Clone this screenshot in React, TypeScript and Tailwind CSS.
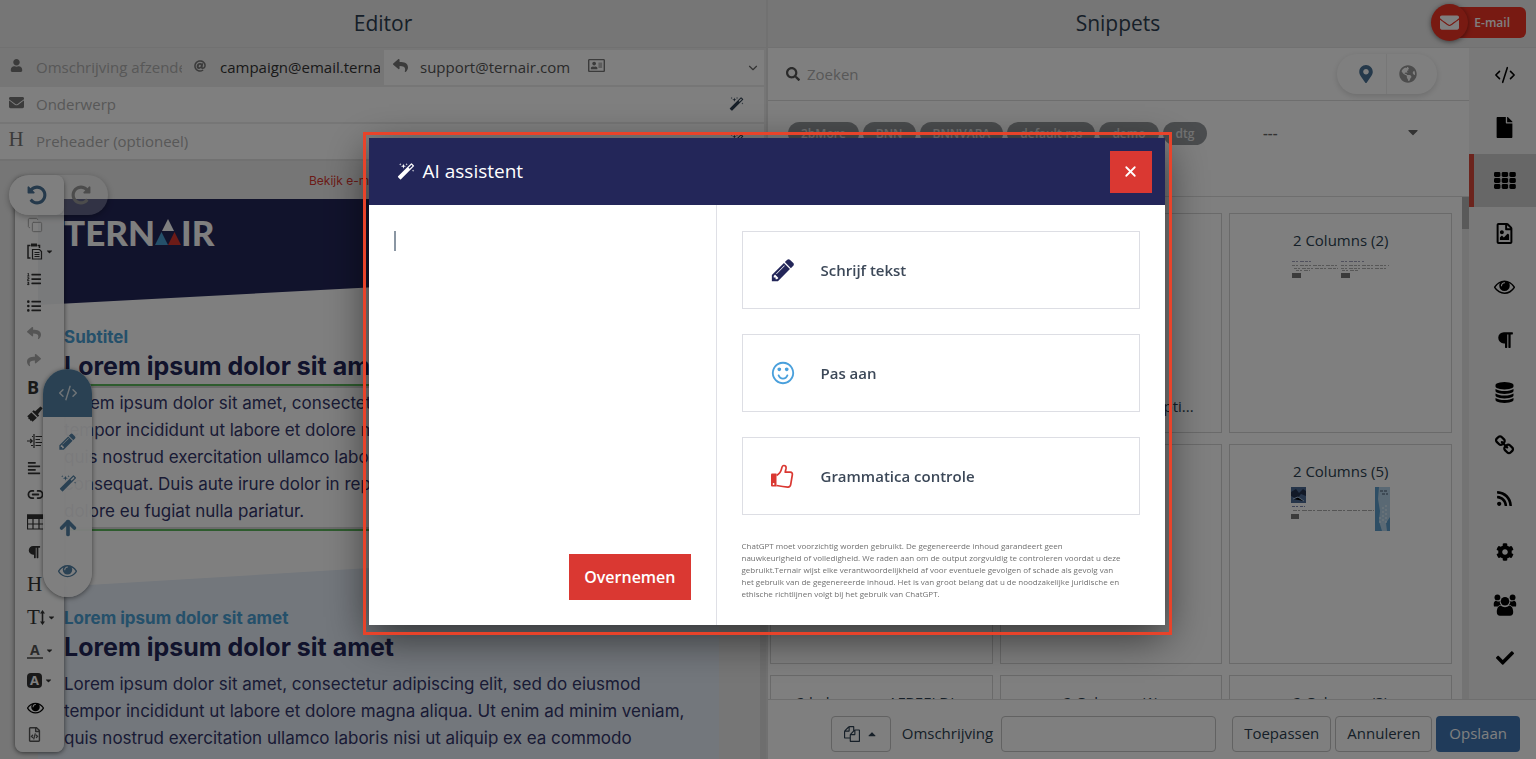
import { useState, type ReactNode } from 'react';
import clsx from 'clsx';
import {
  FaAlignLeft,
  FaAt,
  FaCaretDown,
  FaCaretUp,
  FaCheck,
  FaCog,
  FaEnvelope,
  FaFile,
  FaGlobeAmericas,
  FaListOl,
  FaListUl,
  FaMapMarkerAlt,
  FaParagraph,
  FaRegAddressCard,
  FaRegFileCode,
  FaRegFileImage,
  FaReply,
  FaRss,
  FaSearch,
  FaShare,
  FaUser,
} from 'react-icons/fa';
import {
  ArrowUp,
  ChevronDown,
  CodeXml,
  Copy,
  Link2,
  X,
} from 'lucide-react';

const PATHS = {
  magic:
    'M1254 581l293-293-107-107-293 293zm447-293q0 27-18 45l-1286 1286q-18 18-45 18t-45-18l-198-198q-18-18-18-45t18-45l1286-1286q18-18 45-18t45 18l198 198q18 18 18 45zm-1351-190l98 30-98 30-30 98-30-98-98-30 98-30 30-98zm350 162l196 60-196 60-60 196-60-196-196-60 196-60 60-196zm930 478l98 30-98 30-30 98-30-98-98-30 98-30 30-98zm-640-640l98 30-98 30-30 98-30-98-98-30 98-30 30-98z',
  pencil:
    'M491 1536l91-91-235-235-91 91v107h128v128h107zm523-928q0-22-22-22-10 0-17 7l-542 542q-7 7-7 17 0 22 22 22 10 0 17-7l542-542q7-7 7-17zm-54-192l416 416-832 832h-416v-416zm683 96q0 53-37 90l-166 166-416-416 166-165q36-38 90-38 53 0 91 38l235 234q37 39 37 91z',
  smile:
    'M1262 1075q-37 121-138 195t-228 74-228-74-138-195q-8-25 4-48.5t38-31.5q25-8 48.5 4t31.5 38q25 80 92.5 129.5t151.5 49.5 151.5-49.5 92.5-129.5q8-26 32-38t49-4 37 31.5 4 48.5zm-494-435q0 53-37.5 90.5t-90.5 37.5-90.5-37.5-37.5-90.5 37.5-90.5 90.5-37.5 90.5 37.5 37.5 90.5zm512 0q0 53-37.5 90.5t-90.5 37.5-90.5-37.5-37.5-90.5 37.5-90.5 90.5-37.5 90.5 37.5 37.5 90.5zm256 256q0-130-51-248.5t-136.5-204-204-136.5-248.5-51-248.5 51-204 136.5-136.5 204-51 248.5 51 248.5 136.5 204 204 136.5 248.5 51 248.5-51 204-136.5 136.5-204 51-248.5zm128 0q0 209-103 385.5t-279.5 279.5-385.5 103-385.5-103-279.5-279.5-103-385.5 103-385.5 279.5-279.5 385.5-103 385.5 103 279.5 279.5 103 385.5z',
  eye:
    'M1664 960q-152-236-381-353 61 104 61 225 0 185-131.5 316.5t-316.5 131.5-316.5-131.5-131.5-316.5q0-121 61-225-229 117-381 353 133 205 333.5 326.5t434.5 121.5 434.5-121.5 333.5-326.5zm-720-384q0-20-14-34t-34-14q-125 0-214.5 89.5t-89.5 214.5q0 20 14 34t34 14 34-14 14-34q0-86 61-147t147-61q20 0 34-14t14-34zm848 384q0 34-20 69-140 230-376.5 368.5t-499.5 138.5-499.5-139-376.5-368q-20-35-20-69t20-69q140-229 376.5-368t499.5-139 499.5 139 376.5 368q20 35 20 69z',
  database:
    'M896 768q237 0 443-43t325-127v170q0 69-103 128t-280 93.5-385 34.5-385-34.5-280-93.5-103-128v-170q119 84 325 127t443 43zm0 768q237 0 443-43t325-127v170q0 69-103 128t-280 93.5-385 34.5-385-34.5-280-93.5-103-128v-170q119 84 325 127t443 43zm0-384q237 0 443-43t325-127v170q0 69-103 128t-280 93.5-385 34.5-385-34.5-280-93.5-103-128v-170q119 84 325 127t443 43zm0-1152q208 0 385 34.5t280 93.5 103 128v128q0 69-103 128t-280 93.5-385 34.5-385-34.5-280-93.5-103-128v-128q0-69 103-128t280-93.5 385-34.5z',
  undo:
    'M1664 896q0 156-61 298t-164 245-245 164-298 61q-172 0-327-72.5t-264-204.5q-7-10-6.5-22.5t8.5-20.5l137-138q10-9 25-9 16 2 23 12 73 95 179 147t225 52q104 0 198.5-40.5t163.5-109.5 109.5-163.5 40.5-198.5-40.5-198.5-109.5-163.5-163.5-109.5-198.5-40.5q-98 0-188 35.5t-160 101.5l137 138q31 30 14 69-17 40-59 40h-448q-26 0-45-19t-19-45v-448q0-42 40-59 39-17 69 14l130 129q107-101 244.5-156.5t284.5-55.5q156 0 298 61t245 164 164 245 61 298z',
  files:
    'M1696 384q40 0 68 28t28 68v1216q0 40-28 68t-68 28h-960q-40 0-68-28t-28-68v-288h-544q-40 0-68-28t-28-68v-672q0-40 20-88t48-76l408-408q28-28 76-48t88-20h416q40 0 68 28t28 68v328q68-40 128-40h416zm-544 213l-299 299h299v-299zm-640-384l-299 299h299v-299zm196 647l316-316v-416h-384v416q0 40-28 68t-68 28h-416v640h512v-256q0-40 20-88t48-76zm956 804v-1152h-384v416q0 40-28 68t-68 28h-416v640h896z',
  chain:
    'M1520 1216q0-40-28-68l-208-208q-28-28-68-28-42 0-72 32 3 3 19 18.5t21.5 21.5 15 19 13 25.5 3.5 27.5q0 40-28 68t-68 28q-15 0-27.5-3.5t-25.5-13-19-15-21.5-21.5-18.5-19q-33 31-33 73 0 40 28 68l206 207q27 27 68 27 40 0 68-26l147-146q28-28 28-67zm-703-705q0-40-28-68l-206-207q-28-28-68-28-39 0-68 27l-147 146q-28 28-28 67 0 40 28 68l208 208q27 27 68 27 42 0 72-31-3-3-19-18.5t-21.5-21.5-15-19-13-25.5-3.5-27.5q0-40 28-68t68-28q15 0 27.5 3.5t25.5 13 19 15 21.5 21.5 18.5 19q33-31 33-73zm895 705q0 120-85 203l-147 146q-83 83-203 83-121 0-204-85l-206-207q-83-83-83-203 0-123 88-209l-88-88q-86 88-208 88-120 0-204-84l-208-208q-84-84-84-204t85-203l147-146q83-83 203-83 121 0 204 85l206 207q83 83 83 203 0 123-88 209l88 88q86-88 208-88 120 0 204 84l208 208q84 84 84 204z',
};

function Glyph({ name, size, className }: { name: keyof typeof PATHS; size: number; className?: string }) {
  return (
    <svg viewBox="0 0 1792 1792" width={size} height={size} fill="currentColor" className={className} aria-hidden="true">
      <path d={PATHS[name]} />
    </svg>
  );
}

function GridIcon() {
  return (
    <svg viewBox="0 0 22 17" width={22} height={17} fill="currentColor" aria-hidden="true">
      {[0, 6, 12].map((y) =>
        [0, 7.7, 15.4].map((x) => <rect key={`${x}-${y}`} x={x} y={y} width="6.4" height="5" rx="1.4" />),
      )}
    </svg>
  );
}

function TableIcon() {
  return (
    <svg viewBox="0 0 18 16" width={18} height={16} className="shrink-0" aria-hidden="true">
      <path d="M.5 1H17.500V15H.500zM.5 10H17.500M6 5V15M12 5V15" fill="none" stroke="currentColor" strokeWidth="1.200" />
      <path d="M0 .500H18V5H0z" fill="currentColor" />
    </svg>
  );
}

function PasteIcon() {
  return (
    <svg viewBox="0 0 16 17" width={16} height={17} fill="none" stroke="currentColor" aria-hidden="true">
      <path d="M3.500 2.500H1V15H3.500M10.500 2.500H12.500V5" strokeWidth="1.500" />
      <path d="M4 .500H10V3.500H4z" fill="currentColor" stroke="none" />
      <path d="M5.500 6.500H12.500L14.500 8.500V16H5.500zM7.500 9.500H12.500M7.500 11.500H12.500M7.500 13.500H12.500" strokeWidth="1.200" />
    </svg>
  );
}

function BrushIcon() {
  return (
    <svg viewBox="0 0 16 16" width={16} height={16} fill="currentColor" aria-hidden="true">
      <path d="M13.500.600L15.600 2.200 11 8.200 12.200 9.600 10.800 10.900 5.200 5.500 6.600 4.200 8.200 5.200z" />
      <path d="M4.400 6.400L9.900 11.800 5.600 15.800 4.400 14.600 3.600 14.900 2.700 13.200 1.400 12.900 1.500 11.500.200 10.300z" />
    </svg>
  );
}

function IndentIcon() {
  return (
    <svg viewBox="0 0 16 14" width={16} height={14} fill="none" stroke="currentColor" strokeWidth="1.200" aria-hidden="true">
      <path d="M0 7H5M3.200 5L5.200 7 3.200 9M7 0V14M8.500 2.500H15M5 2.500H6M8.500 5.500H13M8.500 8.500H15M8.500 11.500H14M4 11.500H6" />
    </svg>
  );
}

function HeightIcon() {
  return (
    <svg viewBox="0 0 5 15" width={5} height={15} fill="currentColor" aria-hidden="true">
      <path d="M2.500 0L5 3.500H3.300V11.500H5L2.500 15 0 11.500H1.700V3.500H0z" />
    </svg>
  );
}

function UsersIcon() {
  return (
    <svg viewBox="0 0 24 22" width={24} height={22} fill="currentColor" aria-hidden="true">
      <circle cx="4.4" cy="3.4" r="2.9" />
      <circle cx="19.6" cy="3.4" r="2.9" />
      <path d="M1 12.5C.2 9 1.400 6.800 3 6.800c1.200 1 2.600 1 3.700.2 0 2 .5 3 1.300 4C6.500 11 5.500 11.600 4.800 12.500zM23 12.500c.8-3.500-.4-5.700-2-5.700-1.200 1-2.600 1-3.700.2 0 2-.5 3-1.300 4 1.500 0 2.500.6 3.200 1.500z" />
      <circle cx="12" cy="7.300" r="4.300" />
      <path d="M7.800 11.500c2.500 2.200 5.900 2.200 8.400 0 2.600.2 4 3.300 4 6.500 0 2.500-1.200 3.700-3.200 3.700H7c-2 0-3.200-1.200-3.200-3.700 0-3.200 1.400-6.300 4-6.500z" />
    </svg>
  );
}

function ThumbIcon() {
  return (
    <svg viewBox="0 0 24 24" width={24} height={24} fill="none" aria-hidden="true">
      <path d="M1 10.500Q1 9.500 2 9.500H6.500V22.500H2Q1 22.500 1 21.500Z" fill="currentColor" />
      <circle cx="3.600" cy="20" r=".9" fill="#fff" />
      <path
        d="M6.500 11.500C9.500 9.800 11 7.500 11.600 4.600 12 2.300 12.600 1.500 13.900 1.500 15.600 1.500 16.300 2.700 16 4.500L15.200 8.200H20.300C22 8.200 22.600 9.400 22.300 11L20.700 20.700C20.400 22.500 19.400 23.200 17.700 23.100 14 22.900 10 22.200 6.500 21.500"
        stroke="currentColor"
        strokeWidth="1.700"
        strokeLinejoin="round"
      />
    </svg>
  );
}

function SerifLetter({ children }: { children: ReactNode }) {
  return <span className="font-['Liberation_Serif',serif] text-[21px] leading-none font-medium">{children}</span>;
}

const tools: { label: string; icon: ReactNode; tall?: boolean; caret?: boolean; muted?: boolean }[] = [
  { label: 'Kopiëren', icon: <Copy size={16} strokeWidth={1.5} />, muted: true },
  { label: 'Plakken', icon: <PasteIcon />, caret: true },
  { label: 'Genummerde lijst', icon: <FaListOl size={14} /> },
  { label: 'Lijst', icon: <FaListUl size={14} /> },
  { label: 'Ongedaan maken', icon: <FaReply size={14} />, muted: true },
  { label: 'Opnieuw', icon: <FaShare size={14} />, muted: true },
  { label: 'Vet', icon: <span className="text-[18px] leading-none font-bold">B</span> },
  { label: 'Opmaak', icon: <BrushIcon /> },
  { label: 'Inspringen', icon: <IndentIcon /> },
  { label: 'Uitlijnen', icon: <FaAlignLeft size={14} /> },
  { label: 'Link', icon: <Link2 size={17} strokeWidth={2.5} /> },
  { label: 'Tabel', icon: <TableIcon /> },
  { label: 'Alinea', icon: <FaParagraph size={14} />, tall: true },
  { label: 'Kop', icon: <SerifLetter>H</SerifLetter>, tall: true },
  {
    label: 'Tekstgrootte',
    icon: (
      <span className="flex items-center">
        <SerifLetter>T</SerifLetter>
        <HeightIcon />
      </span>
    ),
    tall: true,
    caret: true,
  },
  {
    label: 'Tekstkleur',
    icon: <span className="border-b-2 border-[#777] px-[3px] text-[14px] leading-none font-bold text-[#555]">A</span>,
    tall: true,
    caret: true,
  },
  {
    label: 'Achtergrondkleur',
    icon: <span className="rounded-sm bg-[#333] px-[3px] text-[13px] leading-[15px] font-bold text-white">A</span>,
    caret: true,
  },
  { label: 'Voorbeeld', icon: <Glyph name="eye" size={17} className="text-black" /> },
  { label: 'Broncode', icon: <FaRegFileCode size={15} className="text-[#555]" /> },
];

const sideItems: { label: string; icon: ReactNode }[] = [
  { label: 'Code', icon: <CodeXml size={22} strokeWidth={1.7} /> },
  { label: 'Pagina', icon: <FaFile size={21} /> },
  { label: 'Snippets', icon: <GridIcon /> },
  { label: 'Afbeeldingen', icon: <FaRegFileImage size={21} /> },
  { label: 'Voorbeeld', icon: <Glyph name="eye" size={21} /> },
  { label: 'Alinea', icon: <FaParagraph size={18} /> },
  { label: 'Data', icon: <Glyph name="database" size={21} /> },
  { label: 'Links', icon: <Glyph name="chain" size={21} /> },
  { label: 'RSS', icon: <FaRss size={17} /> },
  { label: 'Instellingen', icon: <FaCog size={18} /> },
  { label: 'Doelgroep', icon: <UsersIcon /> },
  { label: 'Controle', icon: <FaCheck size={18} /> },
];

const tags = ['2bMore', 'BNN', 'BNNVARA', 'default-rss', 'demo', 'dtg'];

const snippets: { title?: string; art?: 'text' | 'image'; footer?: string }[] = [
  {},
  { footer: 'Afbeelding & descripti...' },
  { title: '2 Columns (2)', art: 'text' },
  {},
  {},
  { title: '2 Columns (5)', art: 'image' },
  { title: '2 kolommen AFBEELDI...' },
  { title: '2 Columns (1)' },
  { title: '2 Columns (3)' },
];

function SnippetArt({ kind }: { kind: 'text' | 'image' }) {
  if (kind === 'text') {
    return (
      <svg viewBox="0 0 98 20" width={98} height={20} className="mt-[9px]" aria-hidden="true">
        <g stroke="#999" strokeDasharray="3 1 2 2 4 1">
          <path d="M0 2.500H20M49 2.500H72" stroke="#a0a0bb" />
          <path d="M0 6.500H45M49 6.500H97M2 9.500H46M49 9.500H95M4 11.500H18M50 11.500H66" strokeWidth=".8" />
        </g>
        <rect x="0" y="14" width="9" height="5" fill="#777" />
        <rect x="49" y="14" width="9" height="5" fill="#777" />
      </svg>
    );
  }
  return (
    <svg viewBox="0 0 99 44" width={99} height={44} className="mt-[6px]" aria-hidden="true">
      <rect width="15" height="16" fill="#4d6a94" />
      <path d="M0 5l5-3 3 4 4-4 3 2v5l-5-2-4 5-6-3z" fill="#24324f" />
      <path d="M2 12l5-2 6 4" stroke="#a9c3e4" />
      <path d="M1 19.500H14" stroke="#7a86b0" strokeDasharray="3 1 2 2" />
      <path d="M2 23.500H83" stroke="#aaa" strokeDasharray="4 1 2 2 5 1" />
      <rect y="27" width="8" height="5" fill="#777" />
      <rect x="84" width="15" height="44" fill="#b5d3e8" />
      <path d="M84 0h4l-1 12 2 12-1 10 3 10h-7zM99 30l-4 6 1 8h3z" fill="#5c9dca" />
      <path d="M89 4h8M91 7h6" stroke="#44566e" strokeDasharray="3 1" />
      <path d="M92 20v16M95 18v20M89 30v8" stroke="#e9f4fb" strokeDasharray="2 2" />
    </svg>
  );
}

const fieldInput = 'min-w-0 flex-1 bg-transparent outline-none placeholder:text-[#b0b0b0]';

function Field({ id, label, icon, value, className }: {
  id: string;
  label: string;
  icon: ReactNode;
  value?: string;
  className?: string;
}) {
  return (
    <div className={clsx('flex h-[35px] items-center gap-3 pl-2 text-[15px]', className)}>
      <label htmlFor={id} aria-label={label} className="flex w-4 justify-center pb-1 text-[#777]">
        {icon}
      </label>
      <input id={id} placeholder={label} defaultValue={value} className={fieldInput} />
    </div>
  );
}

function EditorTools() {
  return (
    <>
      <div className="absolute top-4 left-[15px] w-[49px] rounded-lg bg-white/95 pt-[34px] pb-1 shadow-[0_1px_5px_rgba(0,0,0,0.6)]">
        {tools.map((t) => (
          <button
            key={t.label}
            aria-label={t.label}
            className={clsx(
              'flex w-full items-center gap-0.5 pl-3',
              t.tall ? 'h-[33px]' : 'h-[27px]',
              t.muted ? 'text-[#aaa]' : 'text-[#333]',
            )}
          >
            {t.icon}
            {t.caret && <FaCaretDown size={9} />}
          </button>
        ))}
      </div>

      <div className="absolute top-[14px] left-[9px] flex h-10 w-[99px] overflow-hidden rounded-full bg-white/30 shadow-[0_2px_6px_rgba(0,0,0,0.3)]">
        <button aria-label="Ongedaan maken" className="flex w-[55px] items-center justify-center rounded-r-lg bg-white text-[#4a7396] shadow">
          <Glyph name="undo" size={22} />
        </button>
        <button aria-label="Opnieuw" className="flex flex-1 items-center pl-1.5 text-[#999]">
          <Glyph name="undo" size={22} className="-scale-x-100" />
        </button>
      </div>

      <div className="absolute top-52 left-[43px] flex w-[49px] flex-col overflow-hidden rounded-full bg-white/95 text-[#5483a6] shadow-[0_1px_5px_rgba(0,0,0,0.5)]">
        <button aria-label="Code" className="flex h-12 items-center justify-center bg-[#5483a6] text-[#dfe8ef]">
          <CodeXml size={20} strokeWidth={1.7} />
        </button>
        <button aria-label="Bewerken" className="flex h-[49px] items-center justify-center">
          <Glyph name="pencil" size={19} />
        </button>
        <button aria-label="AI assistent" className="flex h-9 items-center justify-center">
          <Glyph name="magic" size={18} />
        </button>
        <button aria-label="Omhoog" className="flex h-[51px] items-center justify-center">
          <ArrowUp size={22} strokeWidth={4} />
        </button>
        <button aria-label="Voorbeeld" className="flex h-[44px] items-start justify-center pt-2">
          <Glyph name="eye" size={19} />
        </button>
      </div>
    </>
  );
}

function EmailCanvas() {
  return (
    <div className="mr-[41px] ml-[38px] font-[Inter,sans-serif] text-[#232659]">
      <p className="h-[38px] pl-[271px] text-[12px] leading-[40px] text-[#d9372f]">Bekijk e-mail online</p>
      <div className="bg-white">
        <div className="relative h-[106px]">
          <svg viewBox="0 0 680 106" preserveAspectRatio="none" className="absolute h-full w-full" aria-hidden="true">
            <path d="M0 0H680V70L0 106Z" fill="#232659" />
          </svg>
          <div className="relative flex items-center pt-3 pl-[26px] font-[Lato,sans-serif] text-[35px] leading-[42px] font-black text-white">
            TERN
            <svg viewBox="0 0 26 26" width={26} height={26} aria-hidden="true">
              <path d="M13 0l6 12H7z" fill="#fff" />
              <path d="M6.500 13l6.500 13H0z" fill="#4aa0d5" />
              <path d="M19.500 13L26 26H13z" fill="#d9372f" />
            </svg>
            IR
          </div>
        </div>
        <div className="pl-[26px]">
          <h3 className="pt-5 text-[17px] leading-6 font-bold text-[#4aa0d5]">Subtitel</h3>
          <h2 className="text-[25px] leading-[35px] font-bold">Lorem ipsum dolor sit amet</h2>
          <div className="border-y-2 border-[#5cb85c]">
            <p className="border-y-2 border-[#d6d6d6] py-0.5 text-[17px] leading-[27px] text-[#33366b]">
              Lorem ipsum dolor sit amet, consectetur adipiscing elit, sed do eiusmod<br />
              tempor incididunt ut labore et dolore magna aliqua. Ut enim ad minim veniam,<br />
              quis nostrud exercitation ullamco laboris nisi ut aliquip ex ea commodo<br />
              consequat. Duis aute irure dolor in reprehenderit in voluptate velit esse cillum<br />
              dolore eu fugiat nulla pariatur.
            </p>
          </div>
        </div>
        <svg viewBox="0 0 680 41" preserveAspectRatio="none" className="mt-4 block h-[41px] w-full" aria-hidden="true">
          <path d="M0 41L680 0V41Z" fill="#e6eef8" />
        </svg>
        <div className="bg-[#e6eef8] pb-10 pl-[26px]">
          <h3 className="pt-[18px] text-[17px] leading-6 font-bold text-[#4aa0d5]">Lorem ipsum dolor sit amet</h3>
          <h2 className="text-[25px] leading-[35px] font-bold">Lorem ipsum dolor sit amet</h2>
          <p className="pt-[6px] text-[17px] leading-[27px] text-[#33366b]">
            Lorem ipsum dolor sit amet, consectetur adipiscing elit, sed do eiusmod<br />
            tempor incididunt ut labore et dolore magna aliqua. Ut enim ad minim veniam,<br />
            quis nostrud exercitation ullamco laboris nisi ut aliquip ex ea commodo
          </p>
        </div>
      </div>
    </div>
  );
}

function EditorPane() {
  return (
    <section className="flex w-1/2 flex-col overflow-hidden border-r-2 border-[#e2e2e2] bg-[#ececec]">
      <h1 className="flex h-12 shrink-0 items-center justify-center border-b border-[#e2e2e2] text-[21px] text-[#2c3e50]">Editor</h1>
      <div className="mr-0.5 flex flex-col gap-0.5 border-b-2 border-[#e2e2e2] pt-0.5">
        <div className="flex gap-0.5">
          <Field id="sender" label="Omschrijving afzender" icon={<FaUser size={13} />} className="w-[182px] bg-[#ececec]" />
          <Field
            id="from"
            label="Van"
            icon={<FaAt size={12} />}
            value="campaign@email.ternair.com"
            className="w-[198px] pr-0.5 pl-1.5 text-[#333]"
          />
          <div className="flex h-[35px] flex-1 items-center bg-white pr-1 text-[15px] text-[#555]">
            <Field id="reply" label="Antwoord" icon={<FaReply size={15} />} value="support@ternair.com" className="w-[198px] pl-1.5" />
            <FaRegAddressCard size={17} className="mb-1 ml-1.5 text-[#777]" />
            <ChevronDown size={14} className="ml-auto text-[#666]" />
          </div>
        </div>
        <div className="flex items-center bg-white pr-5 text-[#2c3e50]">
          <Field id="subject" label="Onderwerp" icon={<FaEnvelope size={15} />} className="flex-1" />
          <button aria-label="AI assistent onderwerp">
            <Glyph name="magic" size={15} />
          </button>
        </div>
        <div className="flex items-center bg-white pr-5 text-[#2c3e50]">
          <Field id="preheader" label="Preheader (optioneel)" icon={<SerifLetter>H</SerifLetter>} className="flex-1" />
          <button aria-label="AI assistent preheader">
            <Glyph name="magic" size={15} />
          </button>
        </div>
      </div>
      <div className="relative min-h-0 flex-1 overflow-hidden">
        <div className="h-full overflow-hidden border-r-[6px] border-[#dcdcdc]">
          <EmailCanvas />
        </div>
        <EditorTools />
      </div>
    </section>
  );
}

const footerButton = 'h-9 rounded border border-[#c4c4c4]';

function SnippetPane() {
  const [active, setActive] = useState('Snippets');

  return (
    <section className="flex w-1/2 flex-col bg-white">
      <header className="relative flex h-12 shrink-0 items-center justify-center border-b border-[#e2e2e2] bg-[#ececec] pr-[68px]">
        <h1 className="text-[21px] text-[#2c3e50]">Snippets</h1>
        <div className="absolute top-1 right-[10px] flex items-center">
          <span className="z-10 flex size-[37px] items-center justify-center rounded-full bg-[#f03425] text-white shadow-[0_1px_5px_rgba(0,0,0,0.5)]">
            <FaEnvelope size={19} />
          </span>
          <span className="-ml-5 rounded-md bg-[#f03425] pr-4 pl-[26px] text-[12px] leading-[31px] font-semibold text-white">E-mail</span>
        </div>
      </header>

      <div className="flex min-h-0 flex-1">
        <div className="flex min-w-0 flex-1 flex-col">
          <div className="flex h-[53px] shrink-0 items-center gap-[7px] border-b border-[#ddd] pr-8 pl-[18px] text-[15px]">
            <label htmlFor="search" aria-label="Zoeken">
              <FaSearch size={14} className="text-[#555]" />
            </label>
            <input id="search" placeholder="Zoeken" className={fieldInput} />
            <div className="flex h-10 w-[100px] overflow-hidden rounded-full shadow-[0_2px_6px_rgba(0,0,0,0.15)]">
              <button aria-label="Lokaal" className="flex w-[50px] items-center justify-center border-r border-[#eee] pl-2 text-[#4a7396]">
                <FaMapMarkerAlt size={18} />
              </button>
              <button aria-label="Wereldwijd" className="flex flex-1 items-center pl-3 text-[#999]">
                <FaGlobeAmericas size={18} />
              </button>
            </div>
          </div>

          <div className="flex h-24 shrink-0 items-start border-b border-[#ddd] pt-[21px] pr-[48px] pl-5">
            <div className="flex gap-1">
              {tags.map((tag) => (
                <button key={tag} className="h-[23px] rounded-full bg-[#95999c] px-[13px] text-[12px] leading-[23px] font-semibold text-[#e6e6e6]">
                  {tag}
                </button>
              ))}
            </div>
            <div className="ml-auto flex w-[158px] items-center text-[#666]">
              <select aria-label="Categorie" className="flex-1 appearance-none text-[15px] leading-5 font-semibold outline-none">
                <option>---</option>
              </select>
              <FaCaretDown size={16} />
            </div>
          </div>

          <div className="flex min-h-0 flex-1">
            <ul className="grid min-w-0 flex-1 auto-rows-[220px] grid-cols-3 gap-x-[7px] gap-y-[11px] overflow-hidden pt-4 pr-[10px] pl-0.5">
              {snippets.map((s, i) => (
                <li key={i} className="flex flex-col items-center border border-[#d4d4d4] pt-4 text-[15px] text-[#2c3e50]">
                  {s.title && <span className="leading-5">{s.title}</span>}
                  {s.art && <SnippetArt kind={s.art} />}
                  {s.footer && <span className="mt-auto pb-4 leading-5">{s.footer}</span>}
                </li>
              ))}
            </ul>
            <div className="w-[7px] bg-[#e6e6e6]">
              <div className="h-8 bg-[#b5b5b5]" />
            </div>
          </div>
        </div>

        <nav className="flex w-[67px] flex-col overflow-hidden bg-[#f2f2f2]">
          {sideItems.map((item) => (
            <button
              key={item.label}
              aria-label={item.label}
              onClick={() => setActive(item.label)}
              className={clsx(
                'flex h-[53px] shrink-0 items-center justify-center border-l-[5px] pr-px text-black',
                active === item.label ? 'border-[#d9483b] bg-[#cfcfcf]' : 'border-transparent',
              )}
            >
              {item.icon}
            </button>
          ))}
        </nav>
      </div>

      <footer className="flex h-[60px] shrink-0 items-center justify-end border-t border-[#ddd] pt-2 pr-4 text-[15px] text-[#2c3e50]">
        <button aria-label="Kopieer" className={clsx(footerButton, 'flex w-[60px] items-center justify-center gap-1.5')}>
          <Glyph name="files" size={16} />
          <FaCaretUp size={12} />
        </button>
        <label htmlFor="description" className="mr-2 ml-[11px]">Omschrijving</label>
        <input id="description" className="h-9 w-[215px] rounded border border-[#c4c4c4] px-2 outline-none" />
        <button className={clsx(footerButton, 'ml-4 px-[11px]')}>Toepassen</button>
        <button className={clsx(footerButton, 'ml-1 px-[11px]')}>Annuleren</button>
        <button className="ml-1 h-9 rounded bg-[#4077b5] px-[13px] text-white">Opslaan</button>
      </footer>
    </section>
  );
}

const actions = [
  { label: 'Schrijf tekst', icon: <Glyph name="pencil" size={26} />, color: 'text-[#232659]' },
  { label: 'Pas aan', icon: <Glyph name="smile" size={26} />, color: 'text-[#4aa0dc]' },
  { label: 'Grammatica controle', icon: <ThumbIcon />, color: 'text-[#da3832]' },
];

function AssistantDialog() {
  return (
    <div className="fixed inset-0 z-50 flex items-center justify-center bg-black/50 pt-2 pr-0.5">
      <div className="relative pt-[6px] pr-[7px] pb-[10px] pl-[6px]">
        <div role="dialog" aria-labelledby="assistant-title" className="w-[796px] bg-white shadow-[0_12px_40px_rgba(0,0,0,0.6)]">
          <header className="flex h-[67px] items-center gap-2 bg-[#232659] pr-[13px] pl-7 text-white">
            <Glyph name="magic" size={18} />
            <h2 id="assistant-title" className="text-[19px]">AI assistent</h2>
            <button aria-label="Sluiten" className="ml-auto flex size-[42px] items-center justify-center bg-[#da3832]">
              <X size={17} strokeWidth={2.5} />
            </button>
          </header>
          <div className="flex">
            <div className="flex w-[348px] flex-col items-end border-r border-[#dfe0e6] p-[25px]">
              <div className="flex w-full flex-1 pt-px">
                <span className="h-5 w-0.5 bg-[#8a96a3]" />
                <textarea aria-label="Tekst" className="flex-1 resize-none outline-none" />
              </div>
              <button className="h-[46px] bg-[#da3832] px-[15px] text-[16px] font-semibold text-white">Overnemen</button>
            </div>
            <div className="flex flex-1 flex-col gap-[25px] px-[25px] pt-[26px] pb-[25px]">
              {actions.map((a) => (
                <button key={a.label} className="flex h-[78px] items-center border border-[#dddee4] px-[27px] text-left">
                  <span className={clsx('flex w-[51px]', a.color)}>{a.icon}</span>
                  <span className="text-[15px] font-semibold text-[#3c4858]">{a.label}</span>
                </button>
              ))}
              <p className="text-[8px] leading-3 text-[#707070]">
                ChatGPT moet voorzichtig worden gebruikt. De gegenereerde inhoud garandeert geen<br />
                nauwkeurigheid of volledigheid. We raden aan om de output zorgvuldig te controleren voordat u deze<br />
                gebruikt.Ternair wijst elke verantwoordelijkheid af voor eventuele gevolgen of schade als gevolg van<br />
                het gebruik van de gegenereerde inhoud. Het is van groot belang dat u de noodzakelijke juridische en<br />
                ethische richtlijnen volgt bij het gebruik van ChatGPT.
              </p>
            </div>
          </div>
        </div>
        <div className="pointer-events-none absolute inset-0 border-[3px] border-[#e8432a]" />
      </div>
    </div>
  );
}

export default function App() {
  return (
    <main className="flex h-screen overflow-hidden font-['Open_Sans',sans-serif]">
      <EditorPane />
      <SnippetPane />
      <AssistantDialog />
    </main>
  );
}
